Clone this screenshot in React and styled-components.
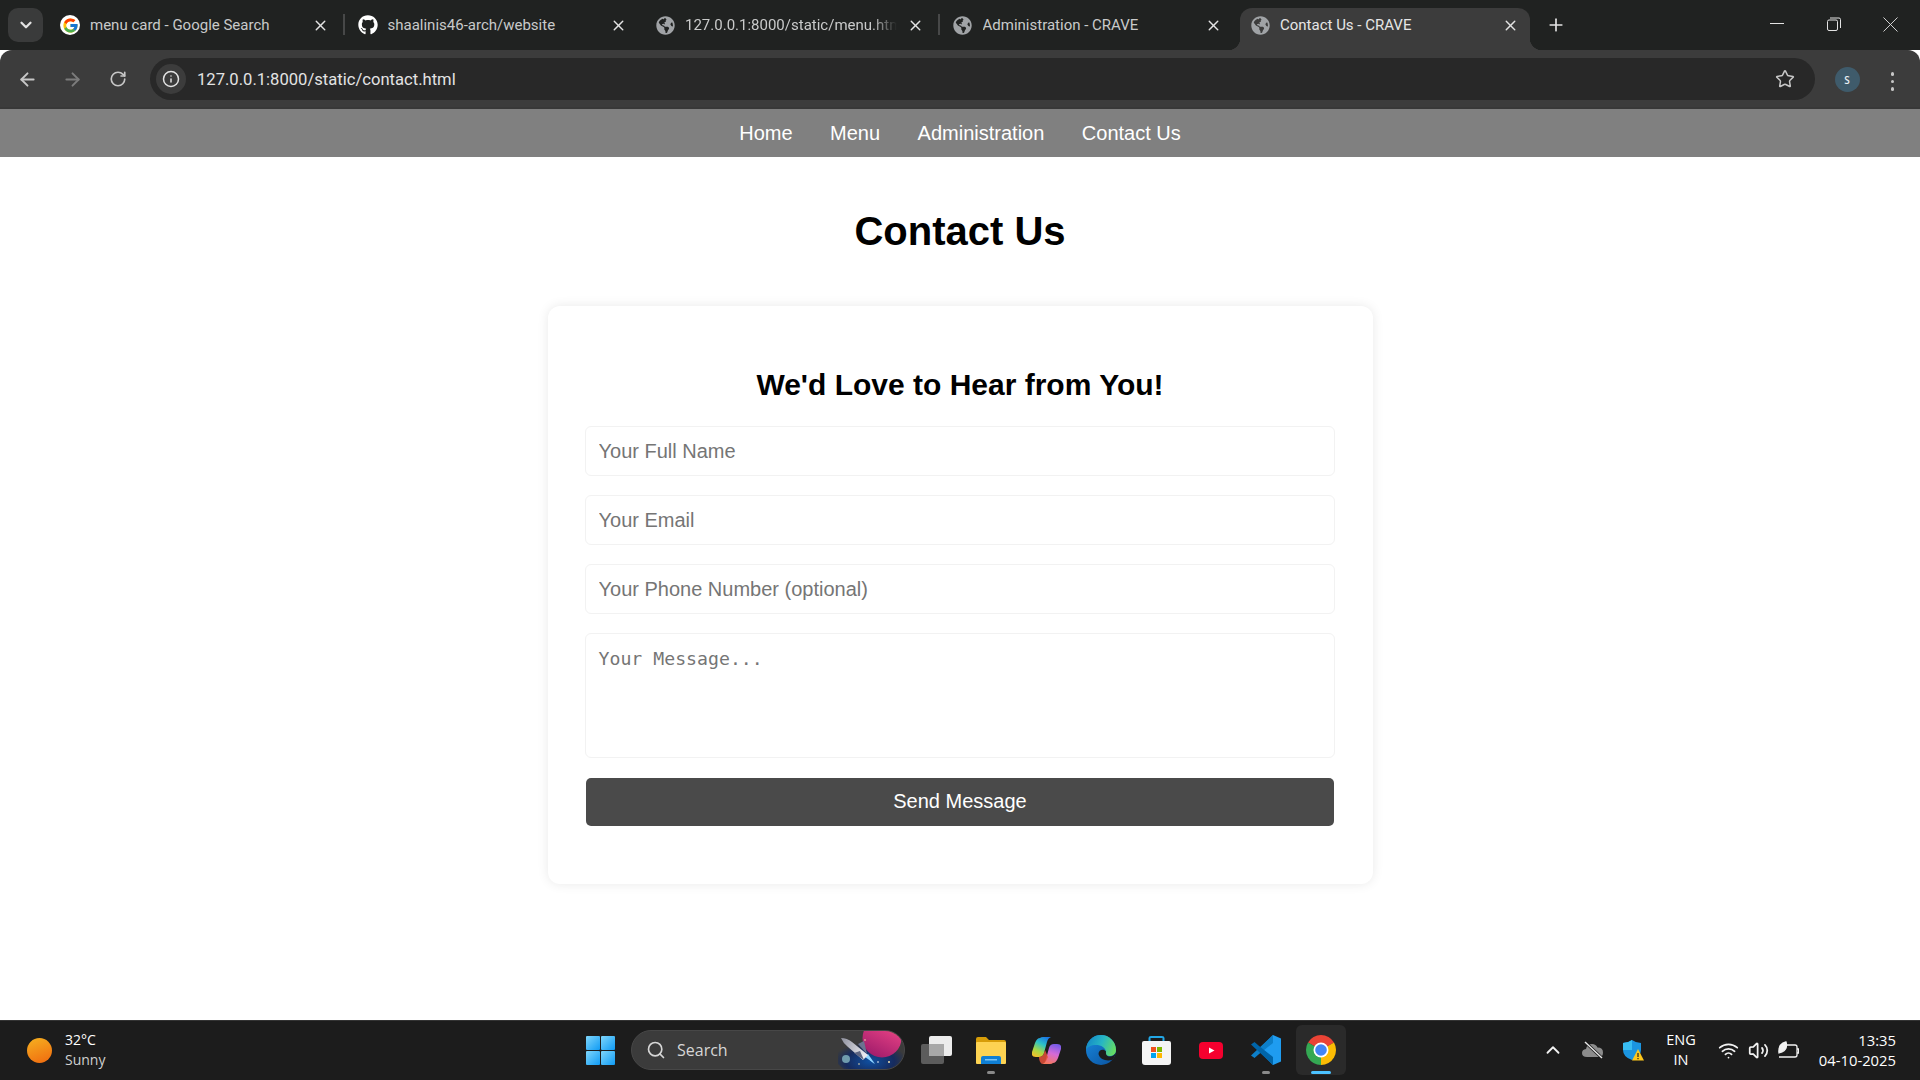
import React from 'react';
import styled, { createGlobalStyle } from 'styled-components';
import { FaGlobeAmericas, FaGithub } from 'react-icons/fa';
import { FcGoogle } from 'react-icons/fc';
import { FiChevronDown } from 'react-icons/fi';
import { ArrowLeft, ArrowRight, RotateCw, Info, Star, X, Plus, Search, ChevronUp, Wifi, Volume2 } from 'lucide-react';

const GlobalStyle = createGlobalStyle`
  html, body { margin: 0; padding: 0; height: 100%; background: #fff; }
  body { font-family: "Liberation Sans", Arial, sans-serif; overflow: hidden; }
  * { box-sizing: border-box; }
`;

const Page = styled.div`
  width: 1920px;
  height: 1080px;
  display: flex;
  flex-direction: column;
`;

const TabStrip = styled.div`
  height: 50px;
  background: #202221;
  display: flex;
  align-items: flex-end;
  padding-left: 8px;
  flex-shrink: 0;
`;

const TabSearch = styled.div`
  width: 35px;
  height: 34px;
  margin: 0 7px 8px 0;
  border-radius: 10px;
  background: #3a3b3b;
  color: #e3e3e3;
  display: flex;
  align-items: center;
  justify-content: center;
`;

const TabList = styled.div`
  display: flex;
  gap: 7.5px;
`;

const Tab = styled.div`
  position: relative;
  width: 290px;
  height: 42px;
  padding: 0 11px 8px 10px;
  display: flex;
  align-items: center;
  gap: 10px;
  border-radius: 12px 12px 0 0;
  font-family: Roboto, "Noto Sans", sans-serif;
  font-size: 15px;
  color: ${(p) => (p.$active ? '#e6e6e6' : '#c9caca')};
  background: ${(p) => (p.$active ? '#3c3c3c' : 'transparent')};

  ${(p) => p.$divider && `
    &::after {
      content: '';
      position: absolute;
      right: -5px;
      top: 6px;
      width: 2px;
      height: 21px;
      background: #474848;
    }
  `}

  ${(p) => p.$active && `
    &::before, &::after {
      content: '';
      position: absolute;
      bottom: 0;
      width: 12px;
      height: 12px;
    }
    &::before {
      left: -12px;
      background: radial-gradient(circle at 0 0, transparent 12px, #3c3c3c 12.5px);
    }
    &::after {
      right: -12px;
      background: radial-gradient(circle at 100% 0, transparent 12px, #3c3c3c 12.5px);
    }
  `}
`;

const Favicon = styled.span`
  width: 20px;
  height: 20px;
  flex-shrink: 0;
  border-radius: 50%;
  background: ${(p) => (p.$white ? '#fff' : 'transparent')};
  color: ${(p) => p.$color || '#a0a3a6'};
  display: flex;
  align-items: center;
  justify-content: center;
`;

const TabTitle = styled.span`
  flex: 1;
  min-width: 0;
  white-space: nowrap;
  overflow: hidden;
  ${(p) => p.$fade && `
    -webkit-mask-image: linear-gradient(90deg, #000 88%, transparent 100%);
    mask-image: linear-gradient(90deg, #000 88%, transparent 100%);
  `}
`;

const TabClose = styled.span`
  color: #e3e3e3;
  display: flex;
  flex-shrink: 0;
`;

const NewTab = styled.div`
  margin: 0 0 15px 16px;
  color: #e3e3e3;
  display: flex;
`;

const WindowButtons = styled.div`
  margin-left: auto;
  padding-right: 1px;
  display: flex;
  align-self: flex-start;
`;

const WindowButton = styled.div`
  width: 57px;
  height: 50px;
  color: #e3e3e3;
  display: flex;
  align-items: center;
  justify-content: center;
  padding-bottom: 2px;
`;

const Toolbar = styled.div`
  height: 59px;
  flex-shrink: 0;
  background: #3c3c3c;
  border-radius: 12px 12px 0 0;
  border-bottom: 2px solid #383838;
  padding: 8px 5px 0 5px;
  display: flex;
  align-items: flex-start;
`;

const NavIcon = styled.div`
  width: 45px;
  height: 42px;
  display: flex;
  align-items: center;
  justify-content: center;
  color: ${(p) => (p.$off ? '#7c7c7c' : '#c7c7c7')};
`;

const AddressBar = styled.div`
  width: 1665px;
  height: 42px;
  margin-left: 10px;
  border-radius: 21px;
  background: #282828;
  padding: 0 20px 0 6px;
  display: flex;
  align-items: center;
`;

const InfoChip = styled.div`
  width: 30px;
  height: 30px;
  border-radius: 50%;
  background: #3c3c3c;
  color: #e3e3e3;
  display: flex;
  align-items: center;
  justify-content: center;
`;

const Url = styled.span`
  margin-left: 11px;
  font-family: Roboto, "Noto Sans", sans-serif;
  font-size: 16.6px;
  color: #e3e3e3;
`;

const BarEnd = styled.div`
  margin-left: auto;
  color: #c7c7c7;
  display: flex;
`;

const Avatar = styled.div`
  width: 25px;
  height: 25px;
  margin: 9px 0 0 19.5px;
  border-radius: 50%;
  background: #3f5b6b;
  color: #e8eef2;
  font-family: "Open Sans", sans-serif;
  font-size: 10px;
  font-weight: 600;
  display: flex;
  align-items: center;
  justify-content: center;
`;

const MenuDots = styled.div`
  margin: 14px 0 0 31px;
  display: flex;
  flex-direction: column;
  gap: 4px;

  span {
    width: 3.5px;
    height: 3.5px;
    border-radius: 50%;
    background: #c7c7c7;
  }
`;

const SiteNav = styled.nav`
  height: 48px;
  flex-shrink: 0;
  background: #808080;
  display: flex;
  justify-content: center;
  align-items: center;
  gap: 37.5px;

  a {
    color: #fff;
    font-size: 20px;
    text-decoration: none;
  }
`;

const Main = styled.main`
  flex: 1;
  min-height: 0;
  padding-top: 51px;
  background: #fff;
  overflow: hidden;
`;

const Heading = styled.h1`
  margin: 0 0 51px;
  font-size: 40px;
  line-height: 47px;
  text-align: center;
  color: #000;
`;

const Card = styled.form`
  width: 825px;
  height: 578px;
  margin: 0 auto;
  padding: 61px 37.5px 0;
  background: #fff;
  border-radius: 12px;
  box-shadow: 0 0 12px rgba(0, 0, 0, 0.09);
  display: flex;
  flex-direction: column;
`;

const CardTitle = styled.h2`
  margin: 0 0 24px;
  font-size: 30px;
  line-height: 35px;
  text-align: center;
  color: #000;
`;

const Field = styled.input`
  width: 100%;
  height: 50px;
  margin-bottom: 19px;
  padding: 0 12.5px;
  border: 1px solid #f2f2f2;
  border-radius: 6px;
  outline: none;
  font-family: "Liberation Sans", Arial, sans-serif;
  font-size: 20px;

  &::placeholder { color: #757575; }
`;

const MessageBox = styled.textarea`
  width: 100%;
  height: 125px;
  margin-bottom: 20px;
  padding: 14px 12.5px 12px;
  border: 1px solid #f2f2f2;
  border-radius: 6px;
  outline: none;
  resize: none;
  font-family: "DejaVu Sans Mono", monospace;
  font-size: 18.2px;
  line-height: 22px;

  &::placeholder { color: #757575; }
`;

const SendButton = styled.button`
  width: 748px;
  height: 48px;
  margin: 0 auto;
  padding: 0 0 2px;
  border: 0;
  border-radius: 5px;
  background: #4a4a4a;
  color: #fff;
  font-family: "Liberation Sans", Arial, sans-serif;
  font-size: 20px;
`;

const Taskbar = styled.footer`
  height: 60px;
  flex-shrink: 0;
  padding-bottom: 1px;
  background: #1c1c1c;
  border-top: 1px solid #333;
  display: flex;
  align-items: center;
  font-family: "Open Sans", "Noto Sans", sans-serif;
  color: #fff;
`;

const Weather = styled.div`
  width: 575px;
  padding-left: 27px;
  display: flex;
  align-items: center;
  gap: 13px;
`;

const Sun = styled.div`
  width: 25px;
  height: 25px;
  border-radius: 50%;
  background: linear-gradient(160deg, #f5b120, #f0690f);
`;

const WeatherText = styled.div`
  font-size: 14px;
  line-height: 20px;

  span {
    display: block;
    color: #d0d0d0;
  }
`;

const Dock = styled.div`
  display: flex;
  align-items: center;
  gap: 5px;
`;

const DockButton = styled.div`
  position: relative;
  width: 50px;
  height: 50px;
  border-radius: 6px;
  display: flex;
  align-items: center;
  justify-content: center;
  background: ${(p) => (p.$active ? '#2a2a2a' : 'transparent')};
`;

const RunDot = styled.span`
  position: absolute;
  left: 50%;
  bottom: 1px;
  width: ${(p) => (p.$active ? '20px' : '8px')};
  height: 3.5px;
  transform: translateX(-50%);
  border-radius: 2px;
  background: ${(p) => (p.$active ? '#4cc2ff' : '#8a8a8a')};
`;

const SearchBox = styled.div`
  width: 274px;
  height: 40px;
  margin: 0 1px;
  padding-left: 14px;
  border-radius: 20px;
  background: #3b3b3b;
  border: 1px solid #474747;
  color: #d6d6d6;
  font-size: 16px;
  display: flex;
  align-items: center;
  gap: 11px;
  overflow: hidden;

  svg:last-child { margin-left: auto; }
`;

const Tray = styled.div`
  margin-left: auto;
  padding-right: 24px;
  display: flex;
  align-items: center;
`;

const TrayIcon = styled.div`
  width: ${(p) => p.$w || 30}px;
  display: flex;
  justify-content: center;
  color: #f2f2f2;
`;

const Lang = styled.div`
  width: 56px;
  margin-right: 4px;
  text-align: center;
  font-size: 14.5px;
  line-height: 20px;
`;

const Clock = styled.div`
  width: 93px;
  text-align: right;
  font-size: 14.8px;
  line-height: 20px;
`;

const StartLogo = () => (
  <svg width="29" height="29" viewBox="0 0 29 29">
    <defs>
      <linearGradient id="win" x1="0" y1="0" x2="1" y2="1">
        <stop offset="0" stopColor="#7fd6fb" />
        <stop offset="1" stopColor="#0f9bf5" />
      </linearGradient>
    </defs>
    <rect x="0" y="0" width="14" height="14" rx="1" fill="url(#win)" />
    <rect x="15" y="0" width="14" height="14" rx="1" fill="url(#win)" />
    <rect x="0" y="15" width="14" height="14" rx="1" fill="url(#win)" />
    <rect x="15" y="15" width="14" height="14" rx="1" fill="url(#win)" />
  </svg>
);

const SearchArt = () => (
  <svg width="66" height="38" viewBox="0 0 66 38">
    <defs>
      <linearGradient id="planet" x1="0.8" y1="0" x2="0.3" y2="1">
        <stop offset="0" stopColor="#ef8a5c" />
        <stop offset="0.35" stopColor="#d83a7f" />
        <stop offset="1" stopColor="#a01c6b" />
      </linearGradient>
      <radialGradient id="nebula" cx="0.5" cy="0.6" r="0.55">
        <stop offset="0" stopColor="#0f4fa0" />
        <stop offset="0.65" stopColor="#162b5e" />
        <stop offset="1" stopColor="#162b5e" stopOpacity="0" />
      </radialGradient>
      <linearGradient id="hull" x1="0" y1="0" x2="1" y2="0.4">
        <stop offset="0" stopColor="#8d8f9c" />
        <stop offset="1" stopColor="#e8e8ee" />
      </linearGradient>
    </defs>
    <ellipse cx="32" cy="27" rx="34" ry="17" fill="url(#nebula)" />
    <circle cx="44" cy="7" r="19.5" fill="url(#planet)" />
    <path d="M29 24 L36 33 L31 28 Z" fill="#8fd4ff" />
    <path d="M27 26 L37 33 L30 23 Z" fill="#8fd4ff" />
    <path d="M3 7 Q9 7 14 11 L30 24 L25 29 L10 16 Q5 12 3 7 Z" fill="url(#hull)" />
    <path d="M16 22 L22 20 L26 29 Z" fill="#5c6480" />
    <path d="M20 13 L26 10 L29 23 Z" fill="#6b7390" />
    <circle cx="8" cy="28" r="4" fill="#6f9bad" />
    <circle cx="27" cy="9" r="0.8" fill="#f3e3b0" />
    <circle cx="21" cy="33" r="0.8" fill="#f3e3b0" />
    <circle cx="40" cy="31" r="0.8" fill="#fff" />
    <circle cx="51" cy="31" r="1" fill="#f3e3b0" />
  </svg>
);

const TaskView = () => (
  <svg width="31" height="29" viewBox="0 0 31 29">
    <rect x="0" y="8" width="23" height="20" rx="2" fill="#5c5c5c" />
    <rect x="8" y="0" width="23" height="20" rx="2" fill="#ececec" />
    <rect x="8" y="8" width="15" height="12" fill="#a8a8a8" />
  </svg>
);

const Explorer = () => (
  <svg width="30" height="27" viewBox="0 0 30 27">
    <path d="M0 2 Q0 0 2 0 H10 L13 3 H28 Q30 3 30 5 V10 H0 Z" fill="#d79d08" />
    <rect x="0" y="5" width="30" height="22" rx="1" fill="#fdd352" />
    <path d="M5 27 V21 Q5 19 7 19 H23 Q25 19 25 21 V27 Z" fill="#0f7fd4" />
    <rect x="9" y="22" width="12" height="1.5" fill="#7ac4f5" />
  </svg>
);

const Copilot = () => (
  <svg width="29" height="27" viewBox="0 0 29 27">
    <defs>
      <linearGradient id="copA" x1="0.7" y1="0" x2="0.2" y2="1">
        <stop offset="0" stopColor="#1b78e2" />
        <stop offset="0.35" stopColor="#2cc2c8" />
        <stop offset="0.7" stopColor="#a6d846" />
        <stop offset="1" stopColor="#f5c02a" />
      </linearGradient>
      <linearGradient id="copB" x1="0.6" y1="0" x2="0.3" y2="1">
        <stop offset="0" stopColor="#7a5ce8" />
        <stop offset="0.45" stopColor="#d56ad8" />
        <stop offset="1" stopColor="#f7785a" />
      </linearGradient>
    </defs>
    <path d="M8 1 Q9 0 11 0 H19 Q16 1 15 5 L12 16 Q11 20 7 20 H4 Q-1 20 0 15 L3 6 Q5 1 8 1 Z" fill="url(#copA)" />
    <path d="M21 26 Q20 27 18 27 H10 Q13 26 14 22 L17 11 Q18 7 22 7 H25 Q30 7 29 12 L26 21 Q24 26 21 26 Z" fill="url(#copB)" />
    <path d="M7 20 Q11 20 12 16 L13 13 L16 20 L14 24 Q13 26 10 27 Q7 25 7 20 Z" fill="#e8503a" opacity="0.85" />
  </svg>
);

const Edge = () => (
  <svg width="30" height="30" viewBox="0 0 30 30">
    <defs>
      <linearGradient id="edgeA" x1="0" y1="0.3" x2="1" y2="0.6">
        <stop offset="0" stopColor="#1488c8" />
        <stop offset="0.5" stopColor="#27b6c4" />
        <stop offset="1" stopColor="#66dc62" />
      </linearGradient>
      <linearGradient id="edgeB" x1="0" y1="0" x2="0.8" y2="1">
        <stop offset="0" stopColor="#1a8ae0" />
        <stop offset="1" stopColor="#0b57a4" />
      </linearGradient>
    </defs>
    <circle cx="15" cy="15" r="15" fill="url(#edgeB)" />
    <path d="M0 15 A15 15 0 0 1 30 15 C30 19 27 21 23.5 21 C20.5 21 19.5 19.5 20 17.5 C20 12.5 15 10 10 10 C5 10 1 12 0 15 Z" fill="url(#edgeA)" />
    <path d="M12.5 19 C12.5 14.5 18 13.5 20 16.5 C19.5 19.5 21 21.5 24 21.5 C26.5 21.5 28.5 20 29.8 17.5 C29.3 20.5 28.2 23 26.5 24.8 C21 26.5 14 25 12.5 19 Z" fill="#1c1c1c" />
  </svg>
);

const StoreBag = () => (
  <svg width="29" height="29" viewBox="0 0 29 29">
    <path d="M7.5 7 V2 Q7.5 1 9 1 H20 Q21.5 1 21.5 2 V7" fill="none" stroke="#22a7e6" strokeWidth="2" />
    <path d="M0 7 Q0 5 2 5 H27 Q29 5 29 7 V26 Q29 29 26 29 H3 Q0 29 0 26 Z" fill="#f4f4f4" />
    <rect x="9" y="11" width="5" height="5" fill="#f0511e" />
    <rect x="15" y="11" width="5" height="5" fill="#7fb900" />
    <rect x="9" y="17" width="5" height="5" fill="#00a3ee" />
    <rect x="15" y="17" width="5" height="5" fill="#ffb700" />
  </svg>
);

const YouTube = () => (
  <svg width="24" height="17" viewBox="0 0 24 17">
    <rect width="24" height="17" rx="4" fill="#f5002e" />
    <path d="M10 5.5 L15.5 8.5 L10 11.5 Z" fill="#fff" />
  </svg>
);

const VsCode = () => (
  <svg width="30" height="30" viewBox="0 0 30 30">
    <path d="M22 0 L30 3.5 V26.5 L22 30 L7 15 Z" fill="#1f9cf0" />
    <path d="M22 0 V8 L7.5 19.5 L3.5 23 L0 20.5 L22 0 Z" fill="#0d7fc9" />
    <path d="M22 30 V22 L7.5 10.5 L3.5 7 L0 9.5 L22 30 Z" fill="#0065a9" />
  </svg>
);

const ChromeLogo = () => (
  <svg width="30" height="30" viewBox="0 0 30 30">
    <path d="M15 15 L2.01 7.5 A15 15 0 0 1 27.99 7.5 Z" fill="#ea4335" />
    <path d="M15 15 L27.99 7.5 A15 15 0 0 1 15 30 Z" fill="#fbbc04" />
    <path d="M15 15 L15 30 A15 15 0 0 1 2.01 7.5 Z" fill="#34a853" />
    <circle cx="15" cy="15" r="7.5" fill="#fff" />
    <circle cx="15" cy="15" r="5.8" fill="#4285f4" />
  </svg>
);

const CloudMuted = () => (
  <svg width="22" height="18" viewBox="0 0 22 18">
    <path d="M5 16 Q0 16 0 12 Q0 8.5 4 8 Q5 3 10 3 Q14 3 15.5 6.5 Q21 6.5 21 11.5 Q21 16 17 16 Z" fill="#8c8c8c" />
    <path d="M3 1 L20 17" stroke="#1c1c1c" strokeWidth="3" />
    <path d="M3 1 L20 17" stroke="#e8e8e8" strokeWidth="1.4" />
  </svg>
);

const ShieldWarn = () => (
  <svg width="21" height="21" viewBox="0 0 21 21">
    <path d="M9 0 Q13 3 18 3 V10 Q18 17 9 20 Q0 17 0 10 V3 Q5 3 9 0 Z" fill="#1b95e0" />
    <path d="M9 0 V10 H0 V3 Q5 3 9 0 Z" fill="#38bdf2" />
    <path d="M15 9 L21 20.5 H9 Z" fill="#fdc71c" />
    <rect x="14.4" y="13" width="1.2" height="4" fill="#222" />
    <rect x="14.4" y="18" width="1.2" height="1.2" fill="#222" />
  </svg>
);

const BatteryLeaf = () => (
  <svg width="21" height="19" viewBox="0 0 21 19" fill="none" stroke="#f2f2f2" strokeWidth="1.3">
    <path d="M9 4 H17 Q19 4 19 6 V14 Q19 16 17 16 H1" />
    <path d="M19 8 H20.5 V12 H19" />
    <path d="M1 12 Q0 3 8 1 Q10 8 4 11 Z" fill="#f2f2f2" />
  </svg>
);

const RestoreIcon = () => (
  <svg width="14" height="14" viewBox="0 0 14 14" fill="none" stroke="#e3e3e3" strokeWidth="1">
    <rect x="0.5" y="3" width="10" height="10.5" rx="1.5" />
    <path d="M3 1 H12 Q13.5 1 13.5 2.5 V11" />
  </svg>
);

const tabs = [
  { title: 'menu card - Google Search', icon: <Favicon $white><FcGoogle size={17} /></Favicon>, divider: true },
  { title: 'shaalinis46-arch/website', icon: <Favicon $color="#fff"><FaGithub size={20} /></Favicon> },
  { title: '127.0.0.1:8000/static/menu.html', icon: <Favicon><FaGlobeAmericas size={19} /></Favicon>, divider: true, fade: true },
  { title: 'Administration - CRAVE', icon: <Favicon><FaGlobeAmericas size={19} /></Favicon> },
  { title: 'Contact Us - CRAVE', icon: <Favicon><FaGlobeAmericas size={19} /></Favicon>, active: true },
];

const dockApps = [
  { key: 'task', icon: <TaskView /> },
  { key: 'files', icon: <Explorer />, running: true },
  { key: 'copilot', icon: <Copilot /> },
  { key: 'edge', icon: <Edge /> },
  { key: 'store', icon: <StoreBag /> },
  { key: 'youtube', icon: <YouTube /> },
  { key: 'code', icon: <VsCode />, running: true },
  { key: 'chrome', icon: <ChromeLogo />, active: true },
];

const App = () => (
  <Page>
    <GlobalStyle />
    <TabStrip>
      <TabSearch><FiChevronDown size={18} strokeWidth={3} /></TabSearch>
      <TabList>
        {tabs.map((t) => (
          <Tab key={t.title} $active={t.active} $divider={t.divider}>
            {t.icon}
            <TabTitle $fade={t.fade}>{t.title}</TabTitle>
            <TabClose><X size={17} strokeWidth={2} /></TabClose>
          </Tab>
        ))}
      </TabList>
      <NewTab><Plus size={20} strokeWidth={2} /></NewTab>
      <WindowButtons>
        <WindowButton><svg width="14" height="2" viewBox="0 0 14 2"><rect width="14" height="1" fill="#e3e3e3" /></svg></WindowButton>
        <WindowButton><RestoreIcon /></WindowButton>
        <WindowButton><X size={27} strokeWidth={0.8} /></WindowButton>
      </WindowButtons>
    </TabStrip>

    <Toolbar>
      <NavIcon><ArrowLeft size={21} strokeWidth={2.2} /></NavIcon>
      <NavIcon $off><ArrowRight size={21} strokeWidth={2.2} /></NavIcon>
      <NavIcon><RotateCw size={18} strokeWidth={2.2} /></NavIcon>
      <AddressBar>
        <InfoChip><Info size={18} /></InfoChip>
        <Url>127.0.0.1:8000/static/contact.html</Url>
        <BarEnd><Star size={20} strokeWidth={1.8} /></BarEnd>
      </AddressBar>
      <Avatar>S</Avatar>
      <MenuDots><span /><span /><span /></MenuDots>
    </Toolbar>

    <SiteNav>
      <a href="#home">Home</a>
      <a href="#menu">Menu</a>
      <a href="#administration">Administration</a>
      <a href="#contact">Contact Us</a>
    </SiteNav>

    <Main>
      <Heading>Contact Us</Heading>
      <Card onSubmit={(e) => e.preventDefault()}>
        <CardTitle>We'd Love to Hear from You!</CardTitle>
        <Field type="text" placeholder="Your Full Name" />
        <Field type="email" placeholder="Your Email" />
        <Field type="tel" placeholder="Your Phone Number (optional)" />
        <MessageBox placeholder="Your Message..." />
        <SendButton type="submit">Send Message</SendButton>
      </Card>
    </Main>

    <Taskbar>
      <Weather>
        <Sun />
        <WeatherText>32°C<span>Sunny</span></WeatherText>
      </Weather>
      <Dock>
        <DockButton><StartLogo /></DockButton>
        <SearchBox>
          <Search size={20} />
          Search
          <SearchArt />
        </SearchBox>
        {dockApps.map((a) => (
          <DockButton key={a.key} $active={a.active}>
            {a.icon}
            {(a.running || a.active) && <RunDot $active={a.active} />}
          </DockButton>
        ))}
      </Dock>
      <Tray>
        <TrayIcon $w={40}><ChevronUp size={22} /></TrayIcon>
        <TrayIcon $w={40}><CloudMuted /></TrayIcon>
        <TrayIcon $w={40}><ShieldWarn /></TrayIcon>
        <Lang>ENG<br />IN</Lang>
        <TrayIcon><Wifi size={21} /></TrayIcon>
        <TrayIcon><Volume2 size={21} /></TrayIcon>
        <TrayIcon><BatteryLeaf /></TrayIcon>
        <Clock>13:35<br />04-10-2025</Clock>
      </Tray>
    </Taskbar>
  </Page>
);

export default App;
